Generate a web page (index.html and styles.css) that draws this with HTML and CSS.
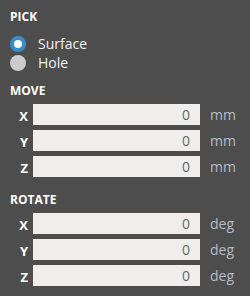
FILE: index.html
```html
<!DOCTYPE html>
<html lang="en">
<head>
    <meta charset="UTF-8">
    <title>Transform</title>
    <link rel="stylesheet" href="styles.css">
</head>
<body>
    <div class="panel">
        <div class="section-title">PICK</div>
        <div class="radio-list">
            <label class="radio"><span class="dot checked"></span>Surface</label>
            <label class="radio"><span class="dot"></span>Hole</label>
        </div>

        <div class="section-title move">MOVE</div>
        <div class="fields">
            <span class="axis">X</span><div class="num">0</div><span class="unit">mm</span>
            <span class="axis">Y</span><div class="num">0</div><span class="unit">mm</span>
            <span class="axis">Z</span><div class="num">0</div><span class="unit">mm</span>
        </div>

        <div class="section-title rotate">ROTATE</div>
        <div class="fields">
            <span class="axis">X</span><div class="num">0</div><span class="unit">deg</span>
            <span class="axis">Y</span><div class="num">0</div><span class="unit">deg</span>
            <span class="axis">Z</span><div class="num">0</div><span class="unit">deg</span>
        </div>
    </div>
</body>
</html>
```
FILE: styles.css
```css
body {
    margin: 0;
    background-color: #4d4d4d;
    font-family: "Open Sans", "Noto Sans", sans-serif;
    color: #f2f2f2;
}
.panel {
    padding: 10px 0 0 10px;
}
.section-title {
    font-size: 12px;
    font-weight: bold;
    line-height: 14px;
    color: #ffffff;
}
.section-title.move {
    margin-top: 13px;
}
.section-title.rotate {
    margin-top: 16px;
}
.radio-list {
    margin-top: 11px;
    display: flex;
    flex-direction: column;
    gap: 2px;
}
.radio {
    display: flex;
    align-items: center;
    font-size: 14px;
    line-height: 17px;
    height: 17px;
}
.dot {
    width: 16px;
    height: 16px;
    border-radius: 50%;
    background-color: #cccccc;
    margin-right: 12px;
    box-sizing: border-box;
}
.dot.checked {
    background-color: #ffffff;
    border: 4px solid #3a8dcc;
}
.fields {
    margin-top: 6px;
    display: grid;
    grid-template-columns: 23px 167px auto;
    row-gap: 5px;
    align-items: center;
}
.axis {
    font-size: 13px;
    font-weight: bold;
    color: #ffffff;
    text-align: right;
    padding-right: 5px;
    padding-top: 3px;
}
.num {
    height: 21px;
    line-height: 21px;
    background-color: #efeeec;
    color: #666666;
    font-size: 14px;
    text-align: right;
    padding-right: 10px;
}
.unit {
    padding-left: 10px;
    font-size: 14px;
    color: #b4bcc6;
}
```
